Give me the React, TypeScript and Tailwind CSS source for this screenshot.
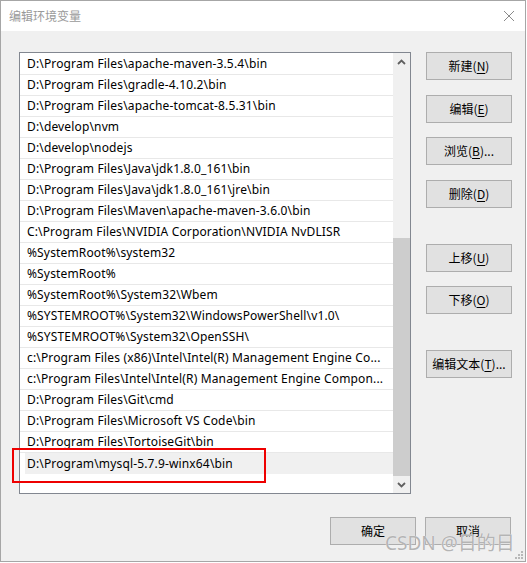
import React from "react";

const rows = [
  "D:\\Program Files\\apache-maven-3.5.4\\bin",
  "D:\\Program Files\\gradle-4.10.2\\bin",
  "D:\\Program Files\\apache-tomcat-8.5.31\\bin",
  "D:\\develop\\nvm",
  "D:\\develop\\nodejs",
  "D:\\Program Files\\Java\\jdk1.8.0_161\\bin",
  "D:\\Program Files\\Java\\jdk1.8.0_161\\jre\\bin",
  "D:\\Program Files\\Maven\\apache-maven-3.6.0\\bin",
  "C:\\Program Files\\NVIDIA Corporation\\NVIDIA NvDLISR",
  "%SystemRoot%\\system32",
  "%SystemRoot%",
  "%SystemRoot%\\System32\\Wbem",
  "%SYSTEMROOT%\\System32\\WindowsPowerShell\\v1.0\\",
  "%SYSTEMROOT%\\System32\\OpenSSH\\",
  "c:\\Program Files (x86)\\Intel\\Intel(R) Management Engine Co...",
  "c:\\Program Files\\Intel\\Intel(R) Management Engine Compon...",
  "D:\\Program Files\\Git\\cmd",
  "D:\\Program Files\\Microsoft VS Code\\bin",
  "D:\\Program Files\\TortoiseGit\\bin",
];

function Btn({ label, k, suffix = "" }: { label: string; k?: string; suffix?: string }) {
  return (
    <div className="w-[86px] h-[28px] bg-[#e1e1e1] border border-[#adadad] flex items-center justify-center text-[12px] text-black leading-none">
      <span>
        {label}
        {k ? (
          <>
            (<span className="underline underline-offset-2">{k}</span>)
          </>
        ) : null}
        {suffix}
      </span>
    </div>
  );
}

export default function App() {
  return (
    <div className="w-[527px] h-[563px] bg-white" style={{ fontFamily: '"Noto Sans", "Noto Sans CJK SC", sans-serif' }}>
      <div className="relative w-[526px] h-[562px] border border-[#a6a6a6] bg-[#f0f0f0] flex flex-col">
        {/* title bar */}
        <div className="h-[30px] bg-white flex items-center justify-between pl-[8px] pr-[8px]">
          <span className="text-[12px] text-[#9a9a9a]" style={{ fontFamily: '"Noto Sans CJK SC", sans-serif' }}>编辑环境变量</span>
          <svg width="12" height="12" viewBox="0 0 12 12" className="mr-[2px]">
            <path d="M1 1 L11 11 M11 1 L1 11" stroke="#8a8a8a" strokeWidth="1" />
          </svg>
        </div>
        {/* body */}
        <div className="flex flex-row pt-[21px] pl-[18px]">
          <div className="w-[392px] h-[442px] border border-[#828790] bg-white flex flex-row">
            <div className="flex-1 pt-[1px] flex flex-col">
              {rows.map((r) => (
                <div key={r} className="h-[21px] border-b border-[#e8e8e8] pl-[7px] flex items-center text-[12px] text-black whitespace-nowrap overflow-hidden tracking-[0.15px]">
                  {r}
                </div>
              ))}
              <div className="h-[21px] pl-[5px]">
                <div className="h-[21px] bg-[#f0f0f0] pl-[2px] flex items-center text-[12px] text-black whitespace-nowrap tracking-[0.15px]">
                  D:\Program\mysql-5.7.9-winx64\bin
                </div>
              </div>
            </div>
            {/* scrollbar */}
            <div className="w-[17px] bg-[#f0f0f0] flex flex-col">
              <div className="h-[17px] flex items-center justify-center">
                <svg width="9" height="6" viewBox="0 0 9 6">
                  <path d="M1 5 L4.5 1.5 L8 5" stroke="#606060" strokeWidth="1.8" fill="none" />
                </svg>
              </div>
              <div className="flex-1 flex flex-col justify-end">
                <div className="h-[238px] bg-[#cdcdcd]" />
              </div>
              <div className="h-[17px] flex items-center justify-center">
                <svg width="9" height="6" viewBox="0 0 9 6">
                  <path d="M1 1 L4.5 4.5 L8 1" stroke="#606060" strokeWidth="1.8" fill="none" />
                </svg>
              </div>
            </div>
          </div>
          <div className="ml-[15px] flex flex-col" style={{ fontFamily: '"Noto Sans CJK SC", sans-serif' }}>
            <Btn label="新建" k="N" />
            <div className="mt-[15px]"><Btn label="编辑" k="E" /></div>
            <div className="mt-[14px]"><Btn label="浏览" k="B" suffix="..." /></div>
            <div className="mt-[15px]"><Btn label="删除" k="D" /></div>
            <div className="mt-[36px]"><Btn label="上移" k="U" /></div>
            <div className="mt-[14px]"><Btn label="下移" k="O" /></div>
            <div className="mt-[36px]"><Btn label="编辑文本" k="T" suffix="..." /></div>
          </div>
        </div>
        <div className="flex flex-row justify-end pr-[14px] mt-[23px] gap-[9px]" style={{ fontFamily: '"Noto Sans CJK SC", sans-serif' }}>
          <Btn label="确定" />
          <Btn label="取消" />
        </div>

        {/* red annotation box */}
        <div className="absolute left-[11px] top-[447px] w-[254px] h-[35px] border-2 border-[#ee0000]" />

        {/* watermark */}
        <div
          className="absolute left-[384px] top-[533px] text-[19px] leading-none text-[#b4b4b4] [text-shadow:0_0_1px_#ffffff]"
          style={{ fontFamily: '"Noto Sans", "Noto Sans CJK SC", sans-serif' }}
        >
          CSDN @日的日
        </div>

        {/* resize grip */}
        <svg className="absolute right-[1px] bottom-[1px]" width="10" height="10" viewBox="0 0 10 10">
          <g fill="#b8b8b8">
            <rect x="7" y="1" width="2" height="2" />
            <rect x="4" y="4" width="2" height="2" />
            <rect x="7" y="4" width="2" height="2" />
            <rect x="1" y="7" width="2" height="2" />
            <rect x="4" y="7" width="2" height="2" />
            <rect x="7" y="7" width="2" height="2" />
          </g>
        </svg>
      </div>
    </div>
  );
}
